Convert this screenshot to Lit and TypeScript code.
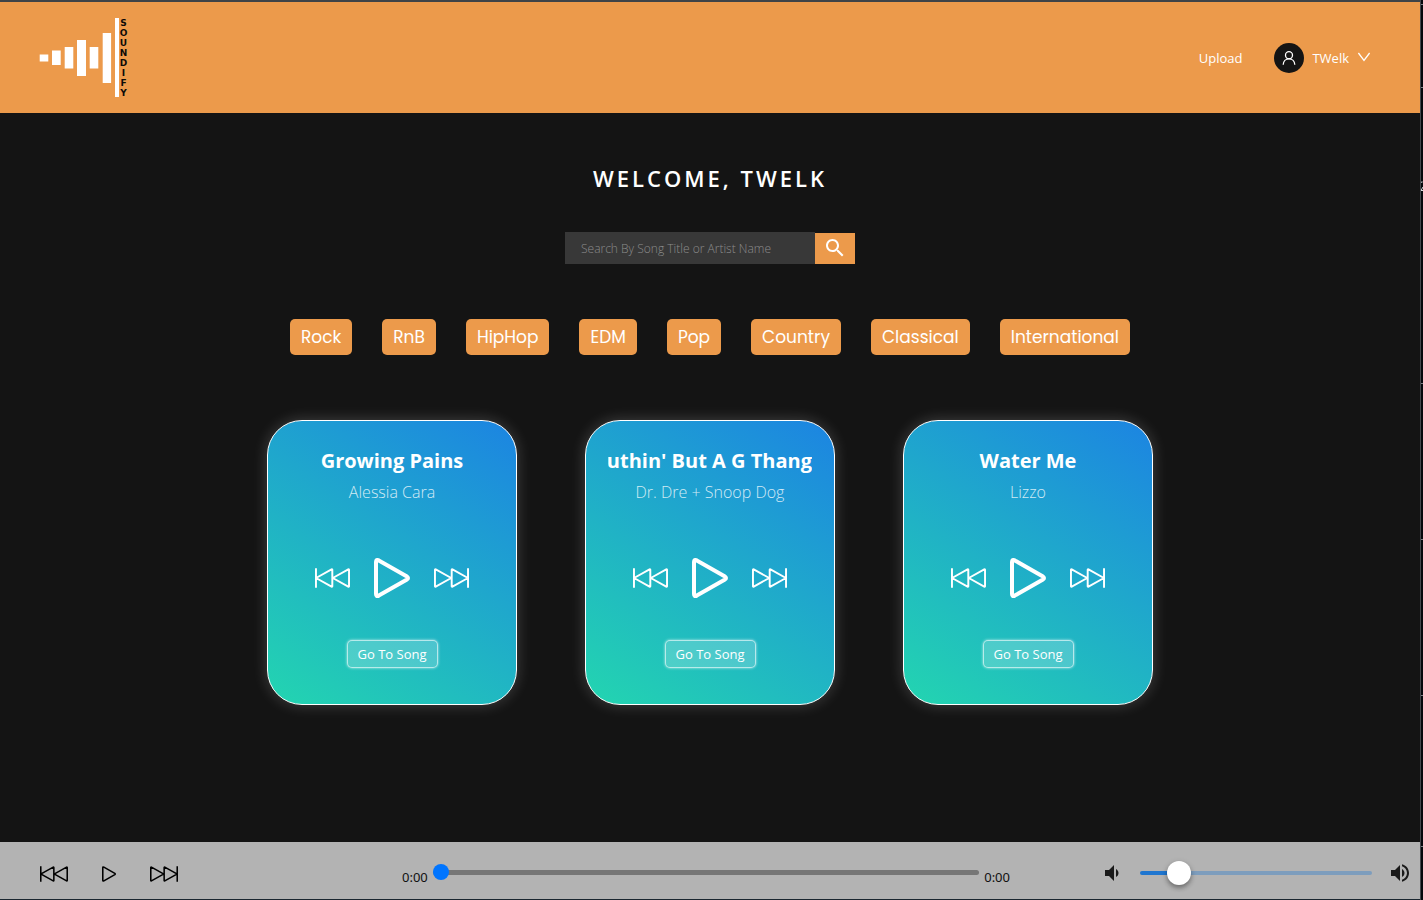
import { LitElement, html, css, svg } from "lit";
import { customElement, property, state } from "lit/decorators.js";

const backIcon = html`<svg class="skip" viewBox="0 0 36 20" aria-hidden="true">
  <path d="M1 0V20M17.8 1.6V18.4Q17.8 19.2 17 18.8L2 10.5Q1.4 10 2 9.5L17 1.2Q17.8 .8 17.8 1.6ZM35 1.6V18.4Q35 19.2 34.2 18.8L19.2 10.5Q18.6 10 19.2 9.5L34.2 1.2Q35 .8 35 1.6Z" />
</svg>`;

const forwardIcon = html`<svg class="skip" viewBox="0 0 36 20" aria-hidden="true">
  <path d="M35 0V20M18.2 1.6V18.4Q18.2 19.2 19 18.8L34 10.5Q34.6 10 34 9.5L19 1.2Q18.2 .8 18.2 1.6ZM1 1.6V18.4Q1 19.2 1.8 18.8L16.8 10.5Q17.4 10 16.8 9.5L1.8 1.2Q1 .8 1 1.6Z" />
</svg>`;

const playIcon = html`<svg class="play" viewBox="0 0 36 40" aria-hidden="true">
  <path d="M2 4V36Q2 39 4.8 37.6L33 21.5Q35 20 33 18.5L4.8 2.4Q2 1 2 4Z" />
</svg>`;

const controlStyles = css`
  button {
    font: inherit;
    color: inherit;
    background: none;
    border: 0;
    padding: 0;
    cursor: pointer;
  }
  svg {
    display: block;
  }
  .skip,
  .play {
    fill: none;
    stroke: currentColor;
    stroke-linejoin: round;
  }
  .skip {
    stroke-width: 2;
  }
  .play {
    stroke-width: 4;
  }
`;

@customElement("app-header")
class AppHeader extends LitElement {
  @property() user = "";

  static styles = css`
    :host {
      display: flex;
      align-items: center;
      justify-content: space-between;
      height: 111px;
      padding: 0 49px 0 39px;
      background: #ec9a4b;
      color: #fff;
      font-size: 13px;
      line-height: 20px;
    }
    .logo {
      display: flex;
      color: #0c0a08;
      text-decoration: none;
    }
    .logo svg {
      width: 80px;
      height: 80px;
      fill: #fff;
    }
    .name {
      display: flex;
      flex-direction: column;
      align-items: center;
      width: 9px;
      font: bold 9px/10px "DejaVu Sans", sans-serif;
    }
    nav {
      display: flex;
      align-items: center;
      gap: 32px;
    }
    nav a {
      color: inherit;
      text-decoration: none;
    }
    .account {
      display: flex;
      align-items: center;
      gap: 8px;
      padding: 0;
      border: 0;
      background: none;
      color: inherit;
      font: inherit;
      cursor: pointer;
    }
    .avatar {
      display: grid;
      place-items: center;
      width: 30px;
      height: 30px;
      border-radius: 50%;
      background: #141414;
    }
    .account svg {
      display: block;
      fill: none;
      stroke: #fff;
    }
  `;

  render() {
    return html`
      <a class="logo" href="#" aria-label="Soundify">
        <svg viewBox="0 0 80 80" aria-hidden="true">
          <path d="M.7 36.5h8.6v7H.7zM13 32.5h8.7v14.6H13zM25.7 29h8.6v21.6h-8.6zM38 22h9v36h-9zM50.7 29h8.6v21.6h-8.6zM63.7 15h8.4v50h-8.4zM76 0h4v79h-4z" />
        </svg>
        <span class="name">${[..."SOUNDIFY"].map((c) => html`<span>${c}</span>`)}</span>
      </a>
      <nav>
        <a href="#upload">Upload</a>
        <button class="account">
          <span class="avatar">
            <svg width="14" height="14" viewBox="0 0 14 14" stroke-width="1.3">
              <circle cx="7" cy="4.2" r="3.5" />
              <path d="M1.2 13.8C1.3 10.2 3.8 7.8 7 7.8s5.700 2.400 5.800 6" />
            </svg>
          </span>
          <span>${this.user}</span>
          <svg width="14" height="12" viewBox="0 0 14 12" stroke-width="1.3">
            <path d="M1.400 1L7 8.500 12.600 1" />
          </svg>
        </button>
      </nav>
    `;
  }
}

@customElement("song-card")
class SongCard extends LitElement {
  @property() name = "";
  @property() artist = "";

  static styles = [
    controlStyles,
    css`
      :host {
        box-sizing: border-box;
        display: flex;
        flex-direction: column;
        align-items: center;
        width: 250px;
        height: 285px;
        padding: 26px 22px 36px;
        border: 1px solid #fff;
        border-radius: 35px;
        background: linear-gradient(33deg, #23d5b0, #1c84e2);
        box-shadow: 0 0 15px rgba(255, 255, 255, 0.2);
        color: #fff;
      }
      h2 {
        display: flex;
        justify-content: center;
        width: 100%;
        margin: 0;
        overflow: hidden;
        font-size: 20px;
        line-height: 28px;
        font-weight: 700;
        white-space: nowrap;
      }
      h2.long {
        justify-content: flex-end;
      }
      p {
        margin: 6px 0 0;
        font-size: 16px;
        line-height: 22px;
        font-weight: 300;
        color: rgba(255, 255, 255, 0.8);
      }
      .controls {
        display: flex;
        align-items: center;
        justify-content: center;
        gap: 24px;
        margin: 55px 0 auto;
      }
      .controls .skip {
        width: 35px;
        height: 20px;
      }
      .controls .play {
        width: 36px;
        height: 40px;
      }
      .go {
        padding: 3px 10px;
        border: 1px solid rgba(255, 255, 255, 0.6);
        border-radius: 5px;
        background: rgba(255, 255, 255, 0.2);
        box-shadow: 0 0 3px rgba(255, 255, 255, 0.7);
        font-size: 13px;
        line-height: 20px;
      }
    `,
  ];

  render() {
    return html`
      <h2 class=${this.name.length > 20 ? "long" : ""}><span>${this.name}</span></h2>
      <p>${this.artist}</p>
      <div class="controls">
        <button aria-label="Previous">${backIcon}</button>
        <button aria-label="Play">${playIcon}</button>
        <button aria-label="Next">${forwardIcon}</button>
      </div>
      <button class="go">Go To Song</button>
    `;
  }
}

@customElement("player-bar")
class PlayerBar extends LitElement {
  @state() position = 0;
  @state() volume = 13;

  static styles = [
    controlStyles,
    css`
      :host {
        box-sizing: border-box;
        display: grid;
        grid-template-columns: 402fr 608fr 410fr;
        align-items: center;
        height: 57px;
        padding-top: 5px;
        background: #b3b3b3;
        color: #111;
      }
      .controls {
        display: flex;
        align-items: center;
        gap: 34px;
        padding: 2px 0 0 40px;
      }
      .controls .skip {
        width: 28px;
        height: 16px;
      }
      .controls .play {
        width: 14px;
        height: 16px;
      }
      .controls svg {
        color: #000;
      }
      input {
        appearance: none;
        flex: 1;
        min-width: 0;
        margin: 0;
        background: none;
      }
      .progress {
        display: flex;
        align-items: center;
        gap: 5px;
        padding-bottom: 2px;
        font-size: 13px;
        line-height: 20px;
        font-family: "Noto Sans", "Open Sans", sans-serif;
      }
      .time {
        padding-top: 10px;
      }
      .seek {
        height: 16px;
      }
      .seek::-webkit-slider-runnable-track {
        height: 5px;
        border-radius: 3px;
        background: #767676;
      }
      .seek::-webkit-slider-thumb {
        appearance: none;
        width: 16px;
        height: 16px;
        margin-top: -6px;
        border-radius: 50%;
        background: #0075ff;
      }
      .volume {
        display: flex;
        align-items: center;
        gap: 16px;
        padding: 0 8px 0 90px;
      }
      .volume svg {
        flex: none;
        fill: #1a1a1a;
      }
      .level {
        height: 24px;
      }
      .level::-webkit-slider-runnable-track {
        height: 4px;
        border-radius: 2px;
        background: linear-gradient(#1f76d0, #1f76d0) 0 0 / calc(12px + (100% - 24px) * var(--level)) 100% no-repeat #7d9dbd;
      }
      .level::-webkit-slider-thumb {
        appearance: none;
        width: 24px;
        height: 24px;
        margin-top: -10px;
        border-radius: 50%;
        background: #fff;
        box-shadow: 0 3px 4px rgba(0, 0, 0, 0.25), 0 2px 6px rgba(0, 0, 0, 0.2);
      }
    `,
  ];

  render() {
    return html`
      <div class="controls">
        <button aria-label="Previous">${backIcon}</button>
        <button aria-label="Play">${playIcon}</button>
        <button aria-label="Next">${forwardIcon}</button>
      </div>
      <div class="progress">
        <span class="time">0:00</span>
        <input class="seek" type="range" min="0" max="100" .value=${String(this.position)} aria-label="Seek" />
        <span class="time">0:00</span>
      </div>
      <div class="volume">
        <svg width="24" height="24" viewBox="0 0 24 24" aria-hidden="true">
          <path d="M18.500 12c0-1.770-1.020-3.290-2.500-4.030v8.050c1.480-.73 2.500-2.250 2.500-4.020zM5 9v6h4l5 5V4L9 9H5z" />
        </svg>
        <input
          class="level"
          type="range"
          min="0"
          max="100"
          .value=${String(this.volume)}
          style="--level: ${this.volume / 100}"
          aria-label="Volume"
          @input=${(e: Event) => (this.volume = Number((e.target as HTMLInputElement).value))}
        />
        <svg width="24" height="24" viewBox="0 0 24 24" aria-hidden="true">
          <path d="M3 9v6h4l5 5V4L7 9H3zm13.500 3c0-1.770-1.020-3.290-2.500-4.030v8.050c1.480-.73 2.500-2.250 2.500-4.020zM14 3.230v2.060c2.890.86 5 3.540 5 6.710s-2.110 5.850-5 6.710v2.060c4.010-.91 7-4.490 7-8.770s-2.990-7.860-7-8.770z" />
        </svg>
      </div>
    `;
  }
}

const GENRES = ["Rock", "RnB", "HipHop", "EDM", "Pop", "Country", "Classical", "International"];

const SONGS = [
  { name: "Growing Pains", artist: "Alessia Cara" },
  { name: "Nuthin' But A G Thang", artist: "Dr. Dre + Snoop Dog" },
  { name: "Water Me", artist: "Lizzo" },
];

@customElement("app-root")
class AppRoot extends LitElement {
  static styles = css`
    :host {
      display: grid;
      grid-template-columns: 1fr 3px;
      min-height: 100vh;
      background: #141414;
      color: #fff;
      font-family: "Segoe UI", "Open Sans", "Noto Sans", sans-serif;
    }
    .page {
      box-sizing: border-box;
      display: flex;
      flex-direction: column;
      border-top: 2px solid #3f4347;
      border-bottom: 1px solid #1b2730;
    }
    .edge {
      position: relative;
      overflow: hidden;
      border-left: 1px solid #44474c;
      background: #05070c;
    }
    .edge svg {
      position: absolute;
      top: 0;
      left: 0;
    }
    main {
      flex: 1;
      display: flex;
      flex-direction: column;
      align-items: center;
      padding: 49px 24px;
    }
    h1 {
      margin: 0;
      font-size: 22px;
      line-height: 32px;
      font-weight: 600;
      letter-spacing: 3px;
      text-transform: uppercase;
    }
    .search {
      display: flex;
      align-items: flex-end;
      margin-top: 38px;
    }
    .search input {
      box-sizing: border-box;
      width: 250px;
      height: 32px;
      margin: 0;
      padding: 0 16px;
      border: 0;
      border-radius: 0;
      background: #383838;
      color: #fff;
      font: 300 12px/20px "Open Sans", "Noto Sans", sans-serif;
    }
    .search input::placeholder {
      color: #8c8c8c;
    }
    .search button {
      display: grid;
      place-items: center;
      width: 40px;
      height: 31px;
      padding: 0 0 2px;
      border: 0;
      background: #ec9a4b;
      cursor: pointer;
    }
    .genres {
      display: flex;
      flex-wrap: wrap;
      justify-content: center;
      gap: 30px;
      margin-top: 55px;
    }
    .genres button {
      height: 36px;
      padding: 0 11px;
      border: 0;
      border-radius: 5px;
      background: #ec9a4b;
      color: #fff;
      font: 400 17px/24px "Poppins", "Inter", sans-serif;
      cursor: pointer;
    }
    .songs {
      display: flex;
      flex-wrap: wrap;
      justify-content: center;
      gap: 68px;
      margin-top: 65px;
    }
  `;

  render() {
    return html`
      <div class="page">
        <app-header user="TWelk"></app-header>
        <main>
          <h1>Welcome, TWelk</h1>
          <form class="search" @submit=${(e: Event) => e.preventDefault()}>
            <input type="text" placeholder="Search By Song Title or Artist Name" aria-label="Search By Song Title or Artist Name" />
            <button aria-label="Search">
              <svg width="24" height="24" viewBox="0 0 24 24" fill="#fff" aria-hidden="true">
                <path d="M15.500 14h-.79l-.28-.27C15.410 12.590 16 11.110 16 9.500 16 5.910 13.090 3 9.500 3S3 5.910 3 9.500 5.910 16 9.500 16c1.610 0 3.090-.59 4.230-1.570l.27.28v.79l5 4.990L20.490 19l-4.990-5zm-6 0C7.010 14 5 11.990 5 9.500S7.010 5 9.500 5 14 7.010 14 9.500 11.990 14 9.500 14z" />
              </svg>
            </button>
          </form>
          <div class="genres">${GENRES.map((g) => html`<button>${g}</button>`)}</div>
          <div class="songs">
            ${SONGS.map((s) => html`<song-card name=${s.name} artist=${s.artist}></song-card>`)}
          </div>
        </main>
        <player-bar></player-bar>
      </div>
      <div class="edge" aria-hidden="true">
        <svg width="2" height="900" viewBox="0 0 2 900" stroke="#7c8087">
          ${[4, 87, 383, 539, 695, 846].map((y) => svg`<path d="M0 ${y + 0.5}H2" />`)}
          <path d="M0 182.500Q1.500 181 2 182.500M2 187L0 190.500H2" stroke="#d8dbe0" fill="none" />
        </svg>
      </div>
    `;
  }
}
